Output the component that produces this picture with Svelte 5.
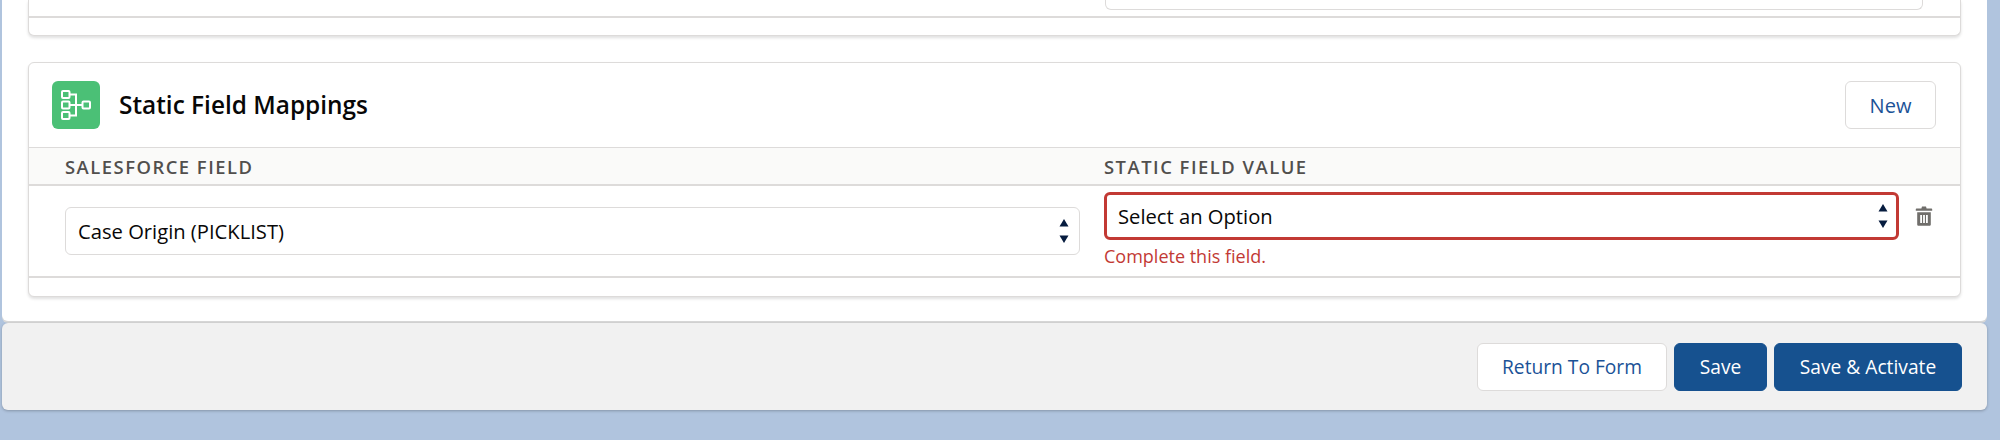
<script lang="ts">
	let fields = ['Case Origin (PICKLIST)'];
</script>

{#snippet updown()}
	<svg class="updown" viewBox="0 0 12 26" width="12" height="26" aria-hidden="true">
		<path d="M6 1 10.5 8.5H1.5Z" />
		<path d="M1.5 17.5H10.5L6 25Z" />
	</svg>
{/snippet}

<div class="page">
	<main class="panel">
		<section class="card card-top">
			<div class="top-row">
				<div class="top-select"></div>
			</div>
			<div class="card-foot"></div>
		</section>

		<section class="card">
			<header class="card-header">
				<span class="icon-tile">
					<svg viewBox="0 0 30 30" width="30" height="30" fill="none" stroke="#fff" stroke-width="2" aria-hidden="true">
						<rect x="1" y="1" width="7.5" height="7" rx="1" />
						<rect x="1" y="11.5" width="7.5" height="7" rx="1" />
						<rect x="1" y="22" width="7.5" height="7" rx="1" />
						<rect x="21.5" y="11.5" width="7.5" height="7" rx="1" />
						<path d="M8.5 4.5H15V25.5H8.5M8.5 15H21.5" />
					</svg>
				</span>
				<h2>Static Field Mappings</h2>
				<button class="btn new">New</button>
			</header>

			<div class="grid-row thead">
				<div class="label">Salesforce Field</div>
				<div class="label">Static Field Value</div>
			</div>

			{#each fields as field}
				<div class="grid-row tbody">
					<div class="select">
						<select>
							<option>{field}</option>
						</select>
						{@render updown()}
					</div>
					<div class="value-cell">
						<div class="value-line">
							<div class="select has-error">
								<select>
									<option>Select an Option</option>
								</select>
								{@render updown()}
							</div>
							<button class="trash" aria-label="Delete">
								<svg viewBox="0 0 18 20" width="18" height="20" fill="#706e6b" aria-hidden="true">
									<path d="M7 0.5H11L11.6 2.5H16.2C16.8 2.5 17.2 2.9 17.2 3.5V4.8H0.8V3.5C0.8 2.9 1.2 2.5 1.8 2.5H6.4Z" />
									<path fill-rule="evenodd" d="M2.2 6.2H15.8V18.4C15.8 19.2 15.2 19.8 14.4 19.8H3.6C2.8 19.8 2.2 19.2 2.2 18.4ZM5.2 9V17H7V9ZM8.1 9V17H9.9V9ZM11 9V17H12.8V9Z" />
								</svg>
							</button>
						</div>
						<div class="error">Complete this field.</div>
					</div>
				</div>
			{/each}
			<div class="card-foot"></div>
		</section>
	</main>

	<footer class="actions">
		<button class="btn">Return To Form</button>
		<button class="btn brand save">Save</button>
		<button class="btn brand activate">Save &amp; Activate</button>
	</footer>
</div>

<style>
	:global(body) {
		background: #b0c4de;
	}

	.page {
		height: 440px;
		overflow: hidden;
		padding: 0 13px 0 2px;
		box-sizing: border-box;
		font-family: 'Open Sans', 'Liberation Sans', sans-serif;
		color: #080707;
	}

	.panel {
		background: #fff;
		height: 321px;
		padding: 0 26px;
		box-sizing: border-box;
		border-radius: 0 0 6px 6px;
		box-shadow: 0 2px 0 #d8d8d8;
		display: flex;
		flex-direction: column;
		gap: 26px;
	}

	.card {
		border: 1px solid #dddbda;
		border-radius: 6px;
		background: #fff;
		box-shadow: 0 2px 3px rgba(0, 0, 0, 0.12);
	}

	.card-top {
		border-top: 0;
		border-radius: 0 0 6px 6px;
	}

	.top-row {
		height: 16px;
		padding-left: 1076px;
		padding-right: 37px;
		border-bottom: 2px solid #dddbda;
	}

	.top-select {
		height: 9px;
		border: 1px solid #dddbda;
		border-top: 0;
		border-radius: 0 0 6px 6px;
	}

	.card-top .card-foot {
		height: 17px;
	}

	.card-foot {
		height: 18px;
	}

	.card-header {
		height: 85px;
		padding: 0 24px 0 23px;
		box-sizing: border-box;
		display: flex;
		align-items: center;
		border-bottom: 1px solid #dddbda;
	}

	.icon-tile {
		width: 48px;
		height: 48px;
		border-radius: 6px;
		background: #4bc076;
		display: flex;
		align-items: center;
		justify-content: center;
		margin-right: 19px;
	}

	h2 {
		margin: 0 0 2px;
		font-size: 24.4px;
		font-weight: 600;
		flex: 1;
	}

	.btn {
		height: 48px;
		box-sizing: border-box;
		border: 1px solid #dddbda;
		border-radius: 6px;
		background: #fff;
		color: #1b5297;
		font: inherit;
		font-size: 19.2px;
		padding: 0;
		width: 190px;
	}

	.btn.new {
		width: 91px;
		font-size: 20px;
	}

	.btn.brand {
		background: #16518f;
		border-color: #16518f;
		color: #fff;
	}

	.btn.save {
		width: 93px;
	}

	.btn.activate {
		width: 188px;
	}

	.grid-row {
		display: grid;
		grid-template-columns: 1015px 1fr;
		column-gap: 24px;
		padding: 0 25px 0 36px;
	}

	.thead {
		height: 36px;
		align-items: center;
		background: #fafaf9;
		border-bottom: 2px solid #dddbda;
	}

	.label {
		font-size: 18.4px;
		font-weight: 600;
		letter-spacing: 1.5px;
		text-transform: uppercase;
		color: #514f4d;
	}

	.tbody {
		height: 92px;
		box-sizing: border-box;
		align-items: center;
		border-bottom: 2px solid #dddbda;
	}

	.select {
		position: relative;
		flex: 1;
	}

	select {
		display: block;
		width: 100%;
		height: 48px;
		box-sizing: border-box;
		appearance: none;
		background: #fff;
		border: 1px solid #dddbda;
		border-radius: 6px;
		padding: 0 12px;
		font: inherit;
		font-size: 20.2px;
		color: #080707;
	}

	.updown {
		position: absolute;
		right: 10px;
		top: 11px;
		fill: #061c3f;
	}

	.has-error select {
		border: 3px solid #c23934;
		padding: 0 11px;
	}

	.value-cell {
		align-self: start;
		padding-top: 6px;
	}

	.value-line {
		display: flex;
		align-items: center;
	}

	.trash {
		width: 36px;
		padding: 0 0 0 14px;
		height: 20px;
		border: 0;
		background: none;
		display: flex;
		justify-content: center;
	}

	.error {
		margin-top: 4px;
		font-size: 18px;
		color: #c23934;
	}

	.actions {
		margin-top: 2px;
		height: 87px;
		box-sizing: border-box;
		background: #f1f1f1;
		border-radius: 6px;
		box-shadow: 0 1px 3px rgba(0, 0, 0, 0.25);
		padding: 0 25px 0 0;
		display: flex;
		justify-content: flex-end;
		align-items: center;
		gap: 7px;
	}
</style>
